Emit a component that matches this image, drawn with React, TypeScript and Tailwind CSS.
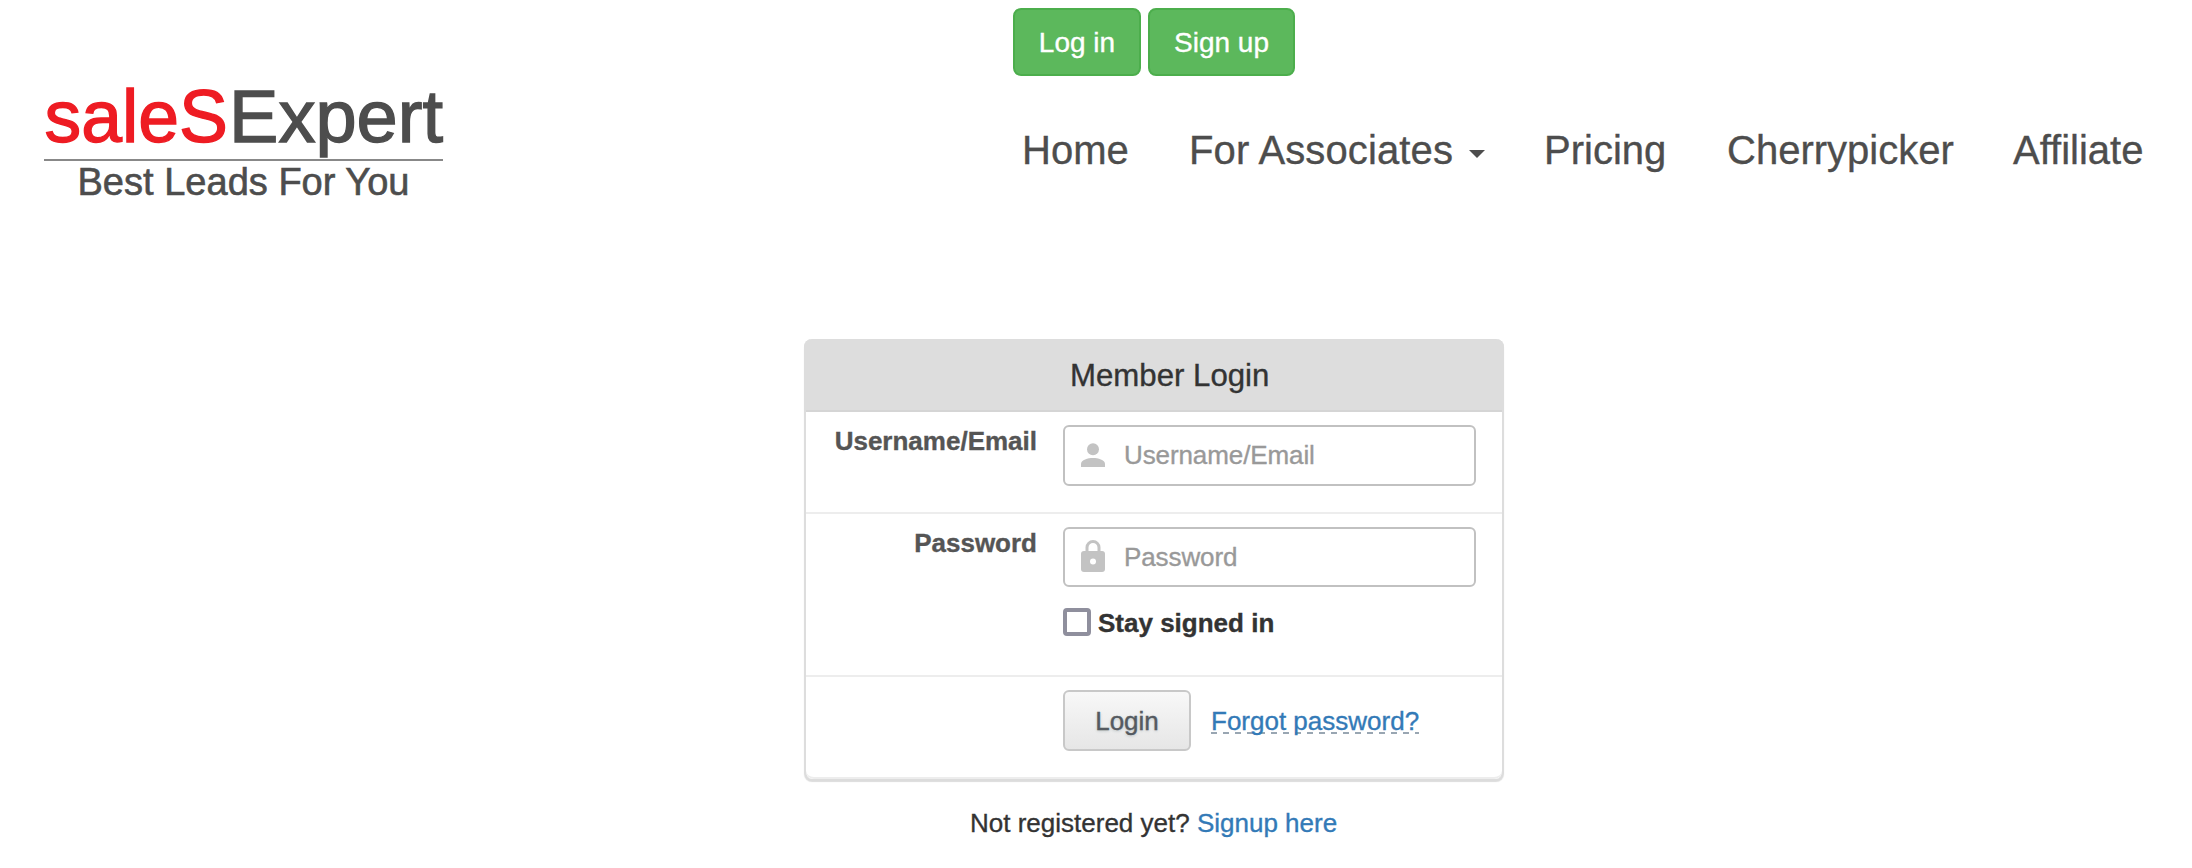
import type { ReactNode } from 'react';

function Logo() {
  return (
    <svg width="420" height="150" viewBox="0 -12 420 150" className="ml-10 mt-16 block shrink-0 overflow-visible [-webkit-text-stroke:0px]" fontFamily="'Liberation Sans', Arial, sans-serif">
      <text x="4.5" y="65.5" fontSize="75" fill="#ee1c23" stroke="#ee1c23" strokeWidth="1.4" textLength="183.500" lengthAdjust="spacingAndGlyphs">saleS</text>
      <text x="189" y="65.5" fontSize="75" fill="#4d4d4d" stroke="#4d4d4d" strokeWidth="1.4" textLength="214" lengthAdjust="spacingAndGlyphs">Expert</text>
      <rect x="4" y="83" width="399" height="2" fill="#888888" />
      <text x="37.5" y="119" fontSize="38" fill="#4d4d4d" stroke="#4d4d4d" strokeWidth="0.6" textLength="332" lengthAdjust="spacingAndGlyphs">Best Leads For You</text>
    </svg>
  );
}

function NavLink({ className, children }: { className: string; children: ReactNode }) {
  return <a href="#" className={`flex shrink-0 items-center ${className}`}>{children}</a>;
}

function UserIcon() {
  return (
    <svg width="24" height="24" viewBox="0 0 24 24" fill="#c3c3c3" className="mb-px shrink-0">
      <circle cx="12" cy="6.2" r="6" />
      <path d="M0 24v-3.200C0 17 7 15 12 15s12 2 12 5.800V24z" />
    </svg>
  );
}

function LockIcon() {
  return (
    <svg width="24" height="32" viewBox="0 0 24 32" fill="none" className="mb-0.5 shrink-0">
      <path d="M6 12V7.500a6 6 0 0 1 12 0V12" stroke="#c3c3c3" strokeWidth="3" />
      <rect y="11" width="24" height="21" rx="3" fill="#c3c3c3" />
      <circle cx="12" cy="21.500" r="3" fill="#fff" />
    </svg>
  );
}

function Field({ icon, placeholder, type, className }: { icon: ReactNode; placeholder: string; type: string; className: string }) {
  return (
    <div className={`flex w-[413px] items-center gap-[19px] rounded-md border-2 border-[#c1c1c1] bg-white pl-4 ${className}`}>
      {icon}
      <input type={type} placeholder={placeholder} className="h-full w-full min-w-0 bg-transparent tracking-[-0.1px] outline-none placeholder:text-[#999]" />
    </div>
  );
}

export default function App() {
  return (
    <div className="h-[868px] overflow-hidden bg-white font-['Liberation_Sans',Arial,sans-serif] text-[26px] leading-9 text-[#333] [-webkit-text-stroke:0.35px]">
      <header className="flex h-[339px]">
        <Logo />
        <div className="ml-[553px] flex-1">
          <div className="mt-2 flex gap-[7px] text-[28px] text-white">
            <button className="h-[68px] w-32 rounded-lg border-2 border-[#4cae4c] bg-[#5cb85c] pt-px">Log in</button>
            <button className="h-[68px] w-[147px] rounded-lg border-2 border-[#4cae4c] bg-[#5cb85c] pt-px">Sign up</button>
          </div>
          <nav className="mt-[50px] flex h-12 pl-[9px] text-[40px] text-[#4d4d4d]">
            <NavLink className="w-[167px]">Home</NavLink>
            <NavLink className="w-[355px]">
              <span className="tracking-[0.12px]">For Associates</span>
              <svg width="16" height="8" viewBox="0 0 16 8" className="ml-4 mt-2"><path d="M0 0h16L8 8z" fill="#4d4d4d" /></svg>
            </NavLink>
            <NavLink className="w-[183px]">Pricing</NavLink>
            <NavLink className="w-[286px]">Cherrypicker</NavLink>
            <NavLink className="">Affiliate</NavLink>
          </nav>
        </div>
      </header>

      <main className="ml-[804px] w-[700px]">
        <form className="h-[440px] rounded-lg border-x-2 border-[#ddd] bg-white shadow-[0_3px_1px_#dcdcdc]">
          <h1 className="-mx-0.5 h-[71px] rounded-t-lg bg-[#ddd] pl-[266px] pt-[19px] text-[31.200px]">Member Login</h1>
          <div className="flex h-[104px] border-y-2 border-t-[#d5d5d5] border-b-[#ededed] pt-[13px]">
            <label className="mr-[26px] w-[231px] text-right font-bold leading-8 text-[#555]">Username/Email</label>
            <Field type="text" placeholder="Username/Email" icon={<UserIcon />} className="h-[61px]" />
          </div>
          <div className="flex h-[163px] border-b-2 border-[#ededed] pt-[13px]">
            <label className="mr-[26px] w-[231px] text-right font-bold leading-8 text-[#555]">Password</label>
            <div>
              <Field type="password" placeholder="Password" icon={<LockIcon />} className="h-[60px]" />
              <label className="mt-[17px] flex h-9 items-center gap-[7px] font-bold">
                <input type="checkbox" className="size-7 appearance-none rounded border-4 border-[#8f8f9d] bg-white" />
                <span className="pt-0.5">Stay signed in</span>
              </label>
            </div>
          </div>
          <div className="flex h-[102px] rounded-b-lg border-b-2 border-[#ededed] pl-[257px] pt-[13px]">
            <button type="button" className="h-[61px] w-32 rounded-md border-2 border-[#c8c8c8] bg-linear-to-b from-[#f8f8f8] to-[#e6e6e6] text-[#555a60] [text-shadow:0_1px_3px_#b8c0c4]">Login</button>
            <a href="#" className="ml-5 mt-[13px] text-[#337ab7]">
              <span className="bg-[repeating-linear-gradient(90deg,#99a6b2_0_6px,transparent_6px_12px)] bg-[length:100%_2px] bg-[position:0_26px] bg-no-repeat">Forgot password?</span>
            </a>
          </div>
        </form>
        <p className="pl-[166px] pt-[26px]">Not registered yet? <a href="#" className="text-[#337ab7]">Signup here</a></p>
      </main>
    </div>
  );
}
